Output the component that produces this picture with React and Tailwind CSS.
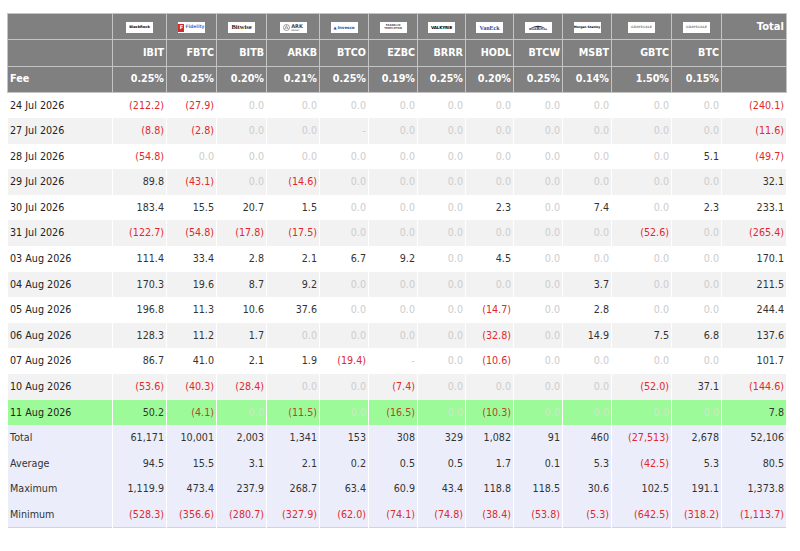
import React from 'react';

const tickers = ['IBIT', 'FBTC', 'BITB', 'ARKB', 'BTCO', 'EZBC', 'BRRR', 'HODL', 'BTCW', 'MSBT', 'GBTC', 'BTC'];
const fees = ['0.25%', '0.25%', '0.20%', '0.21%', '0.25%', '0.19%', '0.25%', '0.20%', '0.25%', '0.14%', '1.50%', '0.15%'];
const colWidths = ['w-[105px]', 'w-[54px]', 'w-[50px]', 'w-[50px]', 'w-[53px]', 'w-[49px]', 'w-[49px]', 'w-[48px]', 'w-[48px]', 'w-[49px]', 'w-[49px]', 'w-[60px]', 'w-[50px]', 'w-[65px]'];

const days = [
  ['24 Jul 2026', '(212.2)', '(27.9)', '0.0', '0.0', '0.0', '0.0', '0.0', '0.0', '0.0', '0.0', '0.0', '0.0', '(240.1)'],
  ['27 Jul 2026', '(8.8)', '(2.8)', '0.0', '0.0', '-', '0.0', '0.0', '0.0', '0.0', '0.0', '0.0', '0.0', '(11.6)'],
  ['28 Jul 2026', '(54.8)', '0.0', '0.0', '0.0', '0.0', '0.0', '0.0', '0.0', '0.0', '0.0', '0.0', '5.1', '(49.7)'],
  ['29 Jul 2026', '89.8', '(43.1)', '0.0', '(14.6)', '0.0', '0.0', '0.0', '0.0', '0.0', '0.0', '0.0', '0.0', '32.1'],
  ['30 Jul 2026', '183.4', '15.5', '20.7', '1.5', '0.0', '0.0', '0.0', '2.3', '0.0', '7.4', '0.0', '2.3', '233.1'],
  ['31 Jul 2026', '(122.7)', '(54.8)', '(17.8)', '(17.5)', '0.0', '0.0', '0.0', '0.0', '0.0', '0.0', '(52.6)', '0.0', '(265.4)'],
  ['03 Aug 2026', '111.4', '33.4', '2.8', '2.1', '6.7', '9.2', '0.0', '4.5', '0.0', '0.0', '0.0', '0.0', '170.1'],
  ['04 Aug 2026', '170.3', '19.6', '8.7', '9.2', '0.0', '0.0', '0.0', '0.0', '0.0', '3.7', '0.0', '0.0', '211.5'],
  ['05 Aug 2026', '196.8', '11.3', '10.6', '37.6', '0.0', '0.0', '0.0', '(14.7)', '0.0', '2.8', '0.0', '0.0', '244.4'],
  ['06 Aug 2026', '128.3', '11.2', '1.7', '0.0', '0.0', '0.0', '0.0', '(32.8)', '0.0', '14.9', '7.5', '6.8', '137.6'],
  ['07 Aug 2026', '86.7', '41.0', '2.1', '1.9', '(19.4)', '-', '0.0', '(10.6)', '0.0', '0.0', '0.0', '0.0', '101.7'],
  ['10 Aug 2026', '(53.6)', '(40.3)', '(28.4)', '0.0', '0.0', '(7.4)', '0.0', '0.0', '0.0', '0.0', '(52.0)', '37.1', '(144.6)'],
  ['11 Aug 2026', '50.2', '(4.1)', '0.0', '(11.5)', '0.0', '(16.5)', '0.0', '(10.3)', '0.0', '0.0', '0.0', '0.0', '7.8'],
];

const summary = [
  ['Total', '61,171', '10,001', '2,003', '1,341', '153', '308', '329', '1,082', '91', '460', '(27,513)', '2,678', '52,106'],
  ['Average', '94.5', '15.5', '3.1', '2.1', '0.2', '0.5', '0.5', '1.7', '0.1', '5.3', '(42.5)', '5.3', '80.5'],
  ['Maximum', '1,119.9', '473.4', '237.9', '268.7', '63.4', '60.9', '43.4', '118.8', '118.5', '30.6', '102.5', '191.1', '1,373.8'],
  ['Minimum', '(528.3)', '(356.6)', '(280.7)', '(327.9)', '(62.0)', '(74.1)', '(74.8)', '(38.4)', '(53.8)', '(5.3)', '(642.5)', '(318.2)', '(1,113.7)'],
];

// tiny issuer logos, white chips in the first header row
const LogoBox = ({ children, className = '' }) => (
  <div className={`mx-auto mt-[2px] flex h-[11px] w-[27px] items-center justify-center overflow-hidden bg-white leading-none ${className}`}>
    {children}
  </div>
);

const logos = [
  <LogoBox key="ibit"><span className="text-[3.6px] font-bold text-black">BlackRock</span></LogoBox>,
  <LogoBox key="fbtc" className="gap-[1px]">
    <span className="flex h-[8px] w-[6px] items-center justify-center bg-[#d42b2b] text-[5px] font-bold text-white">F</span>
    <span className="text-[4.5px] font-bold text-[#3a7bd5]">Fidelity</span>
  </LogoBox>,
  <LogoBox key="bitb"><span className="font-['Liberation_Serif',serif] text-[6.5px] text-[#222]">Bitwise</span></LogoBox>,
  <LogoBox key="arkb" className="gap-[1px]">
    <svg width="7" height="7" viewBox="0 0 10 10">
      <circle cx="5" cy="5" r="4.3" fill="none" stroke="#555" strokeWidth="0.8" />
      <path d="M2.5 7.5 L5 2.2 L7.5 7.5 M3.5 5.8 H6.5" fill="none" stroke="#555" strokeWidth="0.7" />
    </svg>
    <span className="flex flex-col items-start">
      <span className="text-[5px] font-bold text-[#444]">ARK</span>
      <span className="text-[2px] text-[#777]">INVEST</span>
    </span>
  </LogoBox>,
  <LogoBox key="btco" className="gap-[1px]">
    <span className="text-[4px] text-[#1d4fa8]">▲</span>
    <span className="text-[4px] font-bold text-[#1d4fa8]">Invesco</span>
  </LogoBox>,
  <LogoBox key="ezbc" className="flex-col">
    <span className="text-[2.6px] text-[#555]">FRANKLIN</span>
    <span className="text-[2.6px] text-[#555]">TEMPLETON</span>
  </LogoBox>,
  <LogoBox key="brrr"><span className="text-[4.2px] font-bold tracking-tighter text-black">VALKYRIE</span></LogoBox>,
  <LogoBox key="hodl"><span className="font-['Liberation_Serif',serif] text-[6px] font-bold text-[#1d4fa8]">VanEck</span></LogoBox>,
  <LogoBox key="btcw" className="flex-col">
    <svg width="18" height="5" viewBox="0 0 18 5">
      <path d="M1 4.5 Q9 -1 17 4.5 Q9 2 1 4.5 Z" fill="#1c2b55" />
      <rect x="8.5" y="2" width="1" height="3" fill="#1c2b55" />
    </svg>
    <span className="text-[2.6px] text-[#1c2b55]">WisdomTree</span>
  </LogoBox>,
  <LogoBox key="msbt"><span className="whitespace-nowrap text-[3px] text-black">Morgan Stanley</span></LogoBox>,
  <LogoBox key="gbtc" className="h-[9px]"><span className="text-[3.2px] text-[#888]">GRAYSCALE</span></LogoBox>,
  <LogoBox key="btc" className="h-[9px]"><span className="text-[3.2px] text-[#888]">GRAYSCALE</span></LogoBox>,
];

const head = 'h-[26.3px] border border-[#c4c4c4] bg-[#808080] px-[2px] font-bold text-white';
const cell = 'border-x border-white px-[2px]';

const tone = (v, isDay) => {
  if (v.startsWith('(')) return 'text-[#e0282e]';
  if (isDay && (v === '0.0' || v === '-')) return 'text-[#cccccc]';
  return 'text-[#333]';
};

export default function App() {
  return (
    <div className="pl-[7px] pt-[13px]">
      <table className="w-[779px] table-fixed border-collapse border border-[#d4d4d4] font-['DejaVu_Sans',sans-serif] text-[9.6px] leading-none">
        <colgroup>
          {colWidths.map((w, i) => <col key={i} className={w} />)}
        </colgroup>
        <thead>
          <tr>
            <th className={head}></th>
            {logos.map((logo, i) => <th key={i} className={`${head} align-middle`}>{logo}</th>)}
            <th className={`${head} text-right text-[10px]`}>Total</th>
          </tr>
          <tr>
            <th className={head}></th>
            {tickers.map(t => <th key={t} className={`${head} text-right`}>{t}</th>)}
            <th className={head}></th>
          </tr>
          <tr>
            <th className={`${head} text-left`}>Fee</th>
            {fees.map((f, i) => <th key={i} className={`${head} text-right`}>{f}</th>)}
            <th className={head}></th>
          </tr>
        </thead>
        <tbody>
          {days.map((row, r) => {
            const last = r === days.length - 1;
            const bg = last ? 'bg-[#9cfb98]' : r % 2 ? 'bg-[#f2f2f2]' : 'bg-white';
            return (
              <tr key={row[0]} className={`h-[25.6px] ${bg}`}>
                <td className={`${cell} text-left text-[#222]`}>{row[0]}</td>
                {row.slice(1).map((v, i) => {
                  let color = tone(v, true);
                  if (last && v.startsWith('(')) color = 'text-[#b8452a]';
                  if (last && v === '0.0') color = 'text-[#cfe6cb]';
                  return <td key={i} className={`${cell} text-right ${color}`}>{v}</td>;
                })}
              </tr>
            );
          })}
          {summary.map(row => (
            <tr key={row[0]} className="h-[25.6px] bg-[#ebeefa]">
              <td className={`${cell} text-left text-[#333]`}>{row[0]}</td>
              {row.slice(1).map((v, i) => <td key={i} className={`${cell} text-right ${tone(v, false)}`}>{v}</td>)}
            </tr>
          ))}
        </tbody>
      </table>
    </div>
  );
}
